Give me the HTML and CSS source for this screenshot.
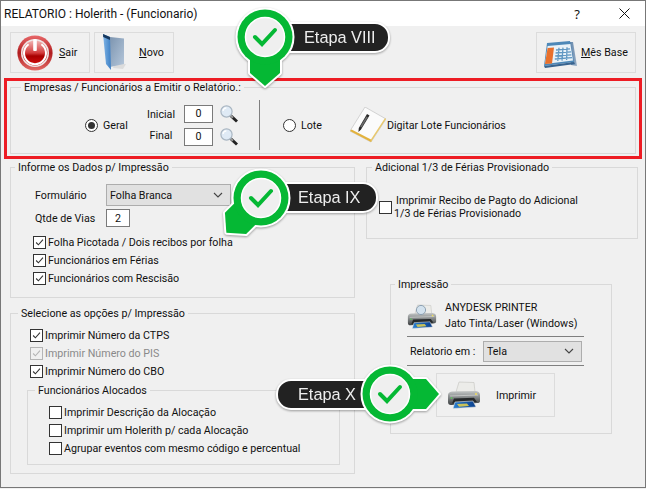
FILE: index.html
```html
<!DOCTYPE html>
<html lang="pt-BR">
<head>
<meta charset="utf-8">
<title>RELATORIO : Holerith - (Funcionario)</title>
<link rel="stylesheet" href="styles.css">
</head>
<body>
<div class="window">
  <svg class="defs" width="0" height="0" aria-hidden="true">
    <defs>
      <symbol id="tick" viewBox="0 0 13 13"><path d="M2.5 6.5 5.2 9.2 10.6 3.2" fill="none" stroke="currentColor" stroke-width="1.3"/></symbol>
      <symbol id="chev" viewBox="0 0 10 6"><path d="M1 1 5 5 9 1" fill="none" stroke="#444" stroke-width="1.1"/></symbol>
      <symbol id="lens" viewBox="0 0 18 18">
        <path d="M10 10 17 16.5" stroke="#222" stroke-width="3" fill="none"/>
        <path d="M10 10 13 12.8" stroke="#999" stroke-width="2" fill="none"/>
        <circle cx="6.5" cy="6.5" r="5.6" fill="#dfeaf5" stroke="#a9b6c2" stroke-width="1.2"/>
        <path d="M3 6a3.6 3.6 0 0 1 3.4-3.2" stroke="#fff" stroke-width="1.2" fill="none"/>
      </symbol>
      <linearGradient id="printBody" x1="0" y1="0" x2="0" y2="1"><stop offset="0" stop-color="#c4c7c7"/><stop offset=".55" stop-color="#777b7c"/><stop offset="1" stop-color="#3b3e40"/></linearGradient>
      <linearGradient id="sheetBlue" x1="0" y1="0" x2="1" y2="0"><stop offset="0" stop-color="#2a7fd0"/><stop offset="1" stop-color="#0b3f8c"/></linearGradient>
      <symbol id="printer" viewBox="0 0 34 28">
        <path d="M12 1 27 1.5 28 11 9 11Z" fill="#ecece9" stroke="#c2c2bd" stroke-width=".6"/>
        <path d="M1 14Q1 11 5 10.5L29 10Q33 10.5 33 14L33 20Q33 22 30 22L4 24Q1 24 1 21Z" fill="url(#printBody)"/>
        <path d="M3 15 31 14" stroke="#cfd1d1" stroke-width=".8"/>
        <path d="M7 17.5 27 16.8 30 21 5 22.5Z" fill="#26292b"/>
        <path d="M8 21 26 20 29 26 6 27.5Z" fill="url(#sheetBlue)" stroke="#e5e5e0" stroke-width=".6"/>
        <path d="M10 23 20 22.4 22 25 12 25.8Z" fill="#e8d24a" opacity=".85"/>
        <circle cx="29" cy="13" r="1" fill="#f0dc5a"/>
        <circle cx="4.5" cy="17" r=".9" fill="#5cc25c"/>
      </symbol>
    </defs>
  </svg>

  <header class="titlebar">
    <span class="title">RELATORIO : Holerith - (Funcionario)</span>
    <span class="title-help">?</span>
    <svg class="title-close" width="11" height="11" viewBox="0 0 11 11"><path d="M.5.5 10.5 10.5M10.5.5.5 10.5" stroke="#111" stroke-width="1" fill="none"/></svg>
  </header>

  <div class="toolbar">
    <div class="tool tool-sair">
      <svg width="36" height="36" viewBox="0 0 36 36">
        <defs>
          <linearGradient id="redRing" x1="0" y1="0" x2="0" y2="1"><stop offset="0" stop-color="#e8686a"/><stop offset=".5" stop-color="#b01c1e"/><stop offset="1" stop-color="#e36a66"/></linearGradient>
          <linearGradient id="redCore" x1="0" y1="0" x2="0" y2="1"><stop offset="0" stop-color="#f1b5b3"/><stop offset=".5" stop-color="#d23a3a"/><stop offset=".62" stop-color="#a80000"/><stop offset="1" stop-color="#d40f0f"/></linearGradient>
        </defs>
        <circle cx="18" cy="18" r="17.6" fill="url(#redRing)"/>
        <circle cx="18" cy="18" r="14" fill="#efe6e6"/>
        <circle cx="18" cy="18" r="12.4" fill="url(#redCore)"/>
        <path d="M11.6 9.2A11 11 0 1 0 24.4 9.2" fill="none" stroke="#fff" stroke-width="2"/>
        <rect x="16.2" y="4" width="3.6" height="12" rx="1" fill="#fff"/>
      </svg>
      <span><u>S</u>air</span>
    </div>
    <div class="tool tool-novo">
      <svg width="23" height="37" viewBox="0 0 23 37">
        <defs>
          <linearGradient id="bookL" x1="0" y1="0" x2="1" y2="0"><stop offset="0" stop-color="#7fb4e6"/><stop offset="1" stop-color="#3d7fc4"/></linearGradient>
          <linearGradient id="bookR" x1="0" y1="0" x2="1" y2="1"><stop offset="0" stop-color="#7d95b0"/><stop offset="1" stop-color="#b4c6da"/></linearGradient>
        </defs>
        <path d="M10 34 20 35 23 30 12 29Z" fill="#dcdcdc"/>
        <path d="M7 3 21 4.5 21 30 7 33Z" fill="url(#bookR)"/>
        <path d="M0 0 7 3 8 36 3 30Z" fill="url(#bookL)"/>
        <path d="M0 0 7 3 7 6 .2 3Z" fill="#16385e"/>
      </svg>
      <span><u>N</u>ovo</span>
    </div>
    <div class="tool tool-mes">
      <svg width="33" height="27" viewBox="0 0 33 27">
        <defs>
          <linearGradient id="calBack" x1="0" y1="0" x2="1" y2="0"><stop offset="0" stop-color="#5a7fa6"/><stop offset="1" stop-color="#97aec6"/></linearGradient>
        </defs>
        <path d="M25 1 29 1 33 25 27 24Z" fill="url(#calBack)"/>
        <path d="M3 2 26 0 30 21 0 25Z" fill="#4d88b8"/>
        <path d="M3.6 5 26.4 3 29 19.5 1 23Z" fill="#e9f2f8"/>
        <path d="M3.6 7 10 6.4 8 22.4 1 23Z" fill="#e8702c"/>
        <path d="M12 9 26 7.8M11.6 12 27 10.8M11.2 15 27.4 13.8M10.8 18 28 16.6M15 6.8 13.8 20M19 6.6 18 19.6M23 6.2 22.6 19" stroke="#5f97c2" stroke-width="1.3" fill="none"/>
        <path d="M0 25 30 21 31 23 1 27Z" fill="#38648f"/>
      </svg>
      <span class="tool-mes-text"><u>M</u>ês Base</span>
    </div>
  </div>

  <section class="highlight">
    <div class="group group-empresas">
      <div class="legend legend-empresas">Empresas / Funcionários a Emitir o Relatório.:</div>
      <div class="emp-row">
        <label class="radio-item radio-geral"><span class="radio radio-on"></span>Geral</label>
        <div class="fields">
          <span class="field-label field-label-a">Inicial</span>
          <span class="textbox textbox-num">0</span>
          <svg class="lens" width="18" height="18"><use href="#lens"/></svg>
          <span class="field-label field-label-b">Final</span>
          <span class="textbox textbox-num">0</span>
          <svg class="lens" width="18" height="18"><use href="#lens"/></svg>
        </div>
        <span class="vdivider"></span>
        <label class="radio-item radio-lote"><span class="radio"></span>Lote</label>
        <svg class="notepad" width="36" height="36" viewBox="0 0 36 36">
          <path d="M15 0 36 12 21 35 0 24Z" fill="#fbfbfb" stroke="#c9c9c9" stroke-width=".8"/>
          <path d="M0 24 21 35 22 33 1.5 22.6Z" fill="#e3b23c"/>
          <path d="M21 35 36 12 35 11 20.6 33Z" fill="#e9c86a"/>
          <path d="M17 7 19.5 8.6 11 22.5 8.4 25 8.8 21Z" fill="#2a2a2a"/>
          <path d="M16.4 9.4 17.8 10.3 11.6 20.4 10.2 19.5Z" fill="#6a6a6a"/>
        </svg>
        <span class="lote-link">Digitar Lote Funcionários</span>
      </div>
    </div>
  </section>

  <div class="columns">
    <div class="col-left">
      <div class="group group-informe">
        <div class="legend legend-informe">Informe os Dados p/ Impressão</div>
        <div class="form-row">
          <span class="form-label">Formulário</span>
          <div class="select select-form"><span>Folha Branca</span><svg width="10" height="6"><use href="#chev"/></svg></div>
        </div>
        <div class="form-row form-row-vias">
          <span class="form-label">Qtde de Vias</span>
          <span class="textbox textbox-vias">2</span>
        </div>
        <div class="checks checks-informe">
          <label class="check"><span class="box"><svg width="11" height="11"><use href="#tick"/></svg></span>Folha Picotada / Dois recibos por folha</label>
          <label class="check"><span class="box"><svg width="11" height="11"><use href="#tick"/></svg></span>Funcionários em Férias</label>
          <label class="check"><span class="box"><svg width="11" height="11"><use href="#tick"/></svg></span>Funcionários com Rescisão</label>
        </div>
      </div>

      <div class="group group-selecione">
        <div class="legend legend-selecione">Selecione as opções p/ Impressão</div>
        <div class="checks">
          <label class="check"><span class="box"><svg width="11" height="11"><use href="#tick"/></svg></span>Imprimir Número da CTPS</label>
          <label class="check check-off"><span class="box"><svg width="11" height="11"><use href="#tick"/></svg></span>Imprimir Número do PIS</label>
          <label class="check"><span class="box"><svg width="11" height="11"><use href="#tick"/></svg></span>Imprimir Número do CBO</label>
        </div>
        <div class="group group-alocados">
          <div class="legend legend-alocados">Funcionários Alocados</div>
          <div class="checks">
            <label class="check"><span class="box"></span>Imprimir Descrição da Alocação</label>
            <label class="check"><span class="box"></span>Imprimir um Holerith p/ cada Alocação</label>
            <label class="check"><span class="box"></span>Agrupar eventos com mesmo código e percentual</label>
          </div>
        </div>
      </div>
    </div>

    <div class="col-right">
      <div class="group group-adicional">
        <div class="legend legend-adicional">Adicional 1/3 de Férias Provisionado</div>
        <label class="check check-multi">
          <span class="box"></span>
          <span class="multi-text"><span class="multi-first">Imprimir Recibo de Pagto do Adicional</span><span>1/3 de Férias Provisionado</span></span>
        </label>
      </div>

      <div class="group group-impressao">
        <div class="legend legend-impressao">Impressão</div>
        <div class="printer-info">
          <svg class="printer-small" width="30" height="25" viewBox="0 0 30 25">
            <use href="#printer" width="30" height="25"/>
            <circle cx="14" cy="6" r="4.6" fill="#cfe0ef" fill-opacity=".85" stroke="#8fa2b3" stroke-width="1"/>
          </svg>
          <div class="printer-text"><span>ANYDESK PRINTER</span><span>Jato Tinta/Laser (Windows)</span></div>
        </div>
        <div class="rel-row">
          <span class="rel-label">Relatorio em :</span>
          <div class="select select-rel"><span>Tela</span><svg width="10" height="6"><use href="#chev"/></svg></div>
        </div>
        <div class="print-btn">
          <svg width="34" height="28"><use href="#printer"/></svg>
          <span>Imprimir</span>
        </div>
      </div>
    </div>
  </div>

  <div class="callout callout-8">
    <div class="callout-label">Etapa VIII</div>
    <svg class="pin" width="80" height="100" viewBox="-40 -35 80 100">
      <polygon class="pin-edge" points="-15,20 -15,36 0,49 15,36 15,20"/>
      <circle class="pin-edge" r="27.5"/>
      <polygon class="pin-fill" points="-15,20 -15,36 0,49 15,36 15,20"/>
      <circle class="pin-fill" r="27.5"/>
      <circle class="pin-ring" r="19.5"/>
      <path class="pin-check" d="M-10 0-3 7 10-7"/>
    </svg>
  </div>

  <div class="callout callout-9">
    <div class="callout-label">Etapa IX</div>
    <svg class="pin" width="80" height="100" viewBox="-40 -35 80 100">
      <g transform="rotate(45)">
        <polygon class="pin-edge" points="-15,20 -15,36 0,49 15,36 15,20"/>
        <circle class="pin-edge" r="27.5"/>
        <polygon class="pin-fill" points="-15,20 -15,36 0,49 15,36 15,20"/>
        <circle class="pin-fill" r="27.5"/>
      </g>
      <circle class="pin-ring" r="19.5"/>
      <path class="pin-check" d="M-10 0-3 7 10-7"/>
    </svg>
  </div>

  <div class="callout callout-10">
    <div class="callout-label">Etapa X</div>
    <svg class="pin" width="100" height="70" viewBox="-35 -35 100 70">
      <g transform="rotate(-90)">
        <polygon class="pin-edge" points="-15,20 -15,36 0,49 15,36 15,20"/>
        <circle class="pin-edge" r="27.5"/>
        <polygon class="pin-fill" points="-15,20 -15,36 0,49 15,36 15,20"/>
        <circle class="pin-fill" r="27.5"/>
      </g>
      <circle class="pin-ring" r="19.5"/>
      <path class="pin-check" d="M-10 0-3 7 10-7"/>
    </svg>
  </div>
</div>
</body>
</html>
```

FILE: styles.css
```css
* { box-sizing: border-box; }
html, body { margin: 0; padding: 0; background: #f0f0f0; }
body { font-family: Roboto, "Liberation Sans", sans-serif; font-size: 10.7px; color: #111; }
.defs { position: absolute; }

.window { position: relative; width: 646px; height: 488px; border: 1px solid #777; background: #f0f0f0; overflow: hidden; }

.titlebar { display: flex; align-items: center; height: 25px; background: #fff; padding-left: 3px; }
.title { font-family: Roboto, "Noto Sans", sans-serif; font-size: 12px; color: #111; flex: 1; }
.title-help { font-family: "Noto Sans", sans-serif; font-size: 13px; margin-right: 39px; }
.title-close { margin-right: 15px; }

.toolbar { display: flex; margin: 6px 9px 0; height: 41px; }
.tool { display: flex; align-items: center; border: 1px solid #dcdcdc; height: 41px; }
.tool-sair { width: 80px; padding-left: 6px; gap: 6px; }
.tool-novo { width: 80px; margin-left: 4px; padding-left: 8px; gap: 13px; }
.tool-mes { width: 100px; margin-left: auto; padding-left: 7px; gap: 4px; }
.tool-mes svg { margin-top: 3px; }

.highlight { margin: 5px 3px 0 3px; height: 81px; padding: 6px 3px 2px; border: 3px solid #ed1c24; }

.group { position: relative; border: 1px solid #d9d9d9; }
.legend { position: absolute; top: -7px; line-height: 14px; white-space: nowrap; background: #f0f0f0; padding: 0 3px; }
.group-empresas { height: 67px; }
.legend-empresas { left: 10px; }
.emp-row { display: flex; align-items: center; height: 50px; margin-top: 12px; padding-left: 74px; }
.radio-item { display: flex; align-items: center; gap: 5px; }
.radio-geral { width: 62px; }
.radio-lote { width: 67px; margin-left: 23px; }
.radio { width: 13px; height: 13px; border: 1px solid #333; border-radius: 50%; background: #fff; position: relative; flex: none; }
.radio-on::after { content: ""; position: absolute; left: 2px; top: 2px; width: 7px; height: 7px; border-radius: 50%; background: #333; }
.fields { display: grid; grid-template-columns: 28px 29px 18px; column-gap: 9px; row-gap: 5px; align-items: center; }
.fields .lens { margin-left: -2px; }
.field-label { text-align: center; }
.field-label-a { padding-top: 2px; }
.field-label-b { padding-bottom: 2px; }
.textbox { background: #fff; border: 1px solid #7a7a7a; display: flex; align-items: center; justify-content: center; height: 18px; }
.vdivider { width: 1px; height: 50px; background: #7f7f7f; margin-left: 19px; }
.notepad { flex: none; }
.lote-link { margin-left: 1px; }

.columns { display: flex; margin: 8px 0 0 9px; }
.col-left { width: 345px; }
.col-right { width: 272px; margin-left: 11px; }

.group-informe { height: 131px; padding: 16px 0 0 24px; }
.legend-informe { left: 4px; }
.form-row { display: flex; align-items: center; }
.form-row-vias { margin-top: 3px; }
.form-label { width: 71px; }
.select { display: flex; align-items: center; justify-content: space-between; background: #e1e1e1; border: 1px solid #adadad; padding: 0 7px 0 3px; }
.select-form { width: 125px; height: 22px; }
.textbox-vias { width: 24px; }
.checks { display: flex; flex-direction: column; }
.checks-informe { margin: 6px 0 0 -2px; }
.check { display: flex; align-items: center; gap: 2px; height: 18px; }
.box { width: 13px; height: 13px; border: 1px solid #333; background: #fff; color: #333; display: flex; align-items: center; justify-content: center; flex: none; }
.check-off { color: #8a8a8a; }
.check-off .box { border-color: #b5b5b5; color: #b5b5b5; background: #f0f0f0; }

.group-selecione { height: 161px; margin-top: 15px; padding: 12px 0 0 19px; }
.legend-selecione { left: 7px; }
.group-alocados { width: 313px; height: 75px; margin: 10px 0 0 -3px; padding: 12px 0 0 21px; }
.legend-alocados { left: 7px; }

.group-adicional { height: 72px; padding: 26px 0 0 12px; }
.legend-adicional { left: 5px; }
.check-multi { height: 26px; align-items: center; }
.multi-text { display: flex; flex-direction: column; line-height: 13px; }
.multi-first { margin-left: 2px; }

.group-impressao { width: 222px; height: 150px; margin: 45px 0 0 24px; padding: 15px 0 0 16px; }
.legend-impressao { left: 4px; }
.printer-info { display: flex; align-items: center; gap: 8px; height: 32px; }
.printer-text { display: flex; flex-direction: column; line-height: 16px; }
.rel-row { display: flex; align-items: center; width: 177px; height: 30px; margin-top: 4px; padding-left: 3px; border-top: 1px solid #7f7f7f; border-bottom: 1px solid #7f7f7f; }
.rel-label { width: 73px; }
.select-rel { width: 99px; height: 21px; }
.print-btn { display: flex; align-items: center; gap: 15px; width: 119px; height: 44px; margin: 7px 0 0 29px; padding-left: 10px; border: 1px solid #dcdcdc; }

.callout { position: absolute; filter: drop-shadow(0 1px 1px rgba(0,0,0,.35)); }
.callout-label { position: absolute; height: 31px; background: #222; color: #eee; border: 2px solid #fff; font-family: "Liberation Sans", sans-serif; font-size: 16.3px; line-height: 27px; border-radius: 0 15px 15px 0; }
.pin { position: absolute; left: 0; top: 0; }
.pin-edge { fill: #fff; stroke: #fff; stroke-width: 4; stroke-linejoin: round; }
.pin-fill { fill: #05b834; }
.pin-ring { fill: #efefef; stroke: #fff; stroke-width: 1.5; }
.pin-check { fill: none; stroke: #05b834; stroke-width: 4; stroke-linecap: round; stroke-linejoin: miter; }

.callout-8 { left: 224px; top: 1px; }
.callout-8 .callout-label { left: 50px; top: 20px; width: 115px; padding-left: 27px; }
.callout-9 { left: 220px; top: 162px; }
.callout-9 .callout-label { left: 50px; top: 19px; width: 107px; padding-left: 25px; }
.callout-10 { left: 275px; top: 358px; }
.callout-10 .callout-label { left: 0; top: 20px; width: 90px; padding-left: 20px; border-radius: 15px 0 0 15px; }
.callout-10 .pin { left: 79px; }
```
